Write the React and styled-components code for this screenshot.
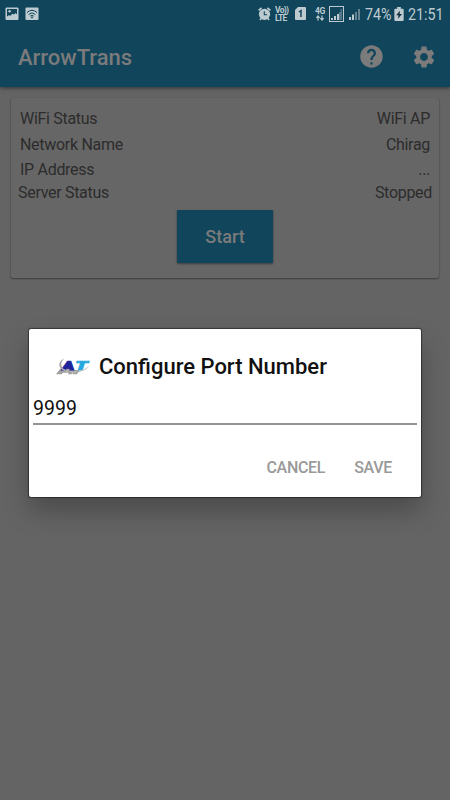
import React from 'react'
import styled, { createGlobalStyle } from 'styled-components';
import { MdHelp, MdSettings } from 'react-icons/md';

const GlobalStyle=createGlobalStyle`
* {
  box-sizing: border-box;
}
body {
  margin: 0;
  background: #646464;
  font-family: Roboto, sans-serif;
}
`;

const Screen=styled.div`
position: relative;
display: flex;
flex-direction: column;
width: 450px;
height: 800px;
overflow: hidden;
background: #646464;
`;

const Header=styled.header`
height: 87px;
background: #11455b;
box-shadow: 0 1px 4px rgba(0, 0, 0, 0.5);
`;

const StatusBar=styled.div`
display: flex;
align-items: center;
justify-content: space-between;
height: 27px;
padding: 0 7px 0 5px;
color: #bdcbd1;
`;

const StatusGroup=styled.div`
display: flex;
align-items: center;
height: 27px;
gap: ${({ $gap }) => $gap || 0}px;
`;

const Glyph=styled.svg`
display: block;
flex: none;
margin-right: ${({ $space }) => $space || 0}px;
`;

const Small=styled.div`
display: flex;
flex-direction: column;
width: ${({ $width }) => $width}px;
margin-right: ${({ $space }) => $space}px;
font-size: 8.5px;
font-weight: 700;
letter-spacing: ${({ $tracking }) => $tracking || 0}px;
line-height: 8px;
white-space: nowrap;
`;

const StatusText=styled.span`
width: ${({ $width }) => $width}px;
margin-right: ${({ $space }) => $space || 0}px;
font-size: 17px;
line-height: 28px;
white-space: nowrap;
transform: scaleX(0.84);
transform-origin: left center;
`;

const Toolbar=styled.div`
display: flex;
align-items: center;
height: 60px;
padding: 0 13px 0 18px;
color: #7b7b7b;
`;

const AppName=styled.h1`
flex: 1;
margin: 2px 0 0;
font-size: 22px;
font-weight: 500;
line-height: 26px;
`;

const IconButton=styled.button`
display: flex;
margin: 0 0 1px;
margin-left: ${({ $left }) => $left || 0}px;
padding: 0;
border: 0;
background: none;
color: inherit;
`;

const Card=styled.section`
display: flex;
flex-direction: column;
align-items: center;
width: 428px;
height: 180px;
margin: 11px 0 0 11px;
padding-top: 8px;
border-radius: 2px;
background: #666666;
box-shadow: 0 1px 2px rgba(0, 0, 0, 0.4), 0 0 1px rgba(0, 0, 0, 0.2);
`;

const Row=styled.div`
display: flex;
justify-content: space-between;
width: 100%;
height: ${({ $height }) => $height}px;
padding: ${({ $wide }) => ($wide ? '0 7px 0 7px' : '0 9px 0 9px')};
color: #2c2c2c;
font-size: 16px;
letter-spacing: -0.3px;
line-height: 25px;
`;

const StartButton=styled.button`
width: 96px;
height: 53px;
margin-top: 5px;
padding: 0;
border: 0;
background: #11455b;
box-shadow: 0 1px 2px rgba(0, 0, 0, 0.4);
color: #7b7b7b;
font-family: inherit;
font-size: 18px;
font-weight: 500;
`;

const Dialog=styled.div`
position: absolute;
top: 329px;
left: 29px;
display: flex;
flex-direction: column;
width: 392px;
height: 168px;
padding: 0 4px;
border-radius: 2px;
background: #fff;
box-shadow: 0 0 1px 1px rgba(0, 0, 0, 0.45), 0 14px 26px rgba(0, 0, 0, 0.26);
`;

const DialogHeader=styled.div`
display: flex;
align-items: center;
height: 60px;
padding: 15px 0 0 22px;
`;

const DialogTitle=styled.h2`
margin: 0 0 0 8px;
color: #111;
font-size: 22px;
font-weight: 500;
line-height: 28px;
white-space: nowrap;
`;

const PortInput=styled.input`
width: 384px;
height: 36px;
padding: 4px 0 0;
border: 0;
border-bottom: 2px solid #949494;
outline: 0;
background: none;
color: #111;
font-family: inherit;
font-size: 19.5px;
`;

const Actions=styled.div`
display: flex;
justify-content: flex-end;
gap: 29px;
padding: 33px 25px 0 0;
`;

const Action=styled.button`
padding: 0;
border: 0;
background: none;
color: #999;
font-family: inherit;
font-size: 16px;
font-weight: 500;
letter-spacing: -0.3px;
line-height: 20px;
`;

const LogoText=styled.text`
font-family: Roboto, sans-serif;
font-size: 13px;
font-weight: 900;
stroke: currentColor;
stroke-width: 1px;
fill: currentColor;
color: ${({ $color }) => $color};
`;

const PictureIcon = () => (
  <Glyph width="14" height="14" viewBox="0 0 14 14">
    <rect x="0.5" y="0.5" width="13" height="12.5" rx="1" fill="#bdcbd1" />
    <path d="M2 2h10v5.4L10.5 6 9 7.5 7.5 6.7 5 9 4 8 2 9.5z" fill="#11455b" />
    <circle cx="4.6" cy="4.3" r="1.2" fill="#bdcbd1" />
  </Glyph>
)

const WifiIcon = () => (
  <Glyph width="14" height="14" viewBox="0 0 14 14">
    <rect x="0.5" y="0.5" width="13" height="12.5" rx="1" fill="#bdcbd1" />
    <path d="M2 5.5Q7 1 12 5.5M3.7 7.4Q7 4.4 10.3 7.4M5.3 9.1Q7 7.7 8.7 9.1" fill="none" stroke="#11455b" />
    <circle cx="7" cy="10.4" r="0.9" fill="#11455b" />
  </Glyph>
)

const AlarmIcon = () => (
  <Glyph width="13" height="14" viewBox="0 0 13 14" $space={4}>
    <circle cx="6.5" cy="7.3" r="5.6" fill="currentColor" />
    <path d="M.6 3.4L3.6 .8M12.4 3.4L9.4 .8M3 11.5l-1 1.5M10 11.5l1 1.5" stroke="currentColor" strokeWidth="1.6" />
    <path d="M6.3 4.2v3.5h2.8" fill="none" stroke="#11455b" strokeWidth="1.1" />
  </Glyph>
)

const SimIcon = () => (
  <Glyph width="11" height="13" viewBox="0 0 11 13" $space={9}>
    <path d="M3 0h7q1 0 1 1v11q0 1-1 1H1q-1 0-1-1V3z" fill="currentColor" />
    <path d="M4 5l2-1.4V10" fill="none" stroke="#11455b" strokeWidth="1.5" />
  </Glyph>
)

const DataIcon = () => (
  <Glyph width="10" height="6" viewBox="0 0 10 6">
    <path d="M3 5.5V1.5M1.4 2.8L3 1l1.6 1.8M7 .5v4M5.4 3.2L7 5l1.6-1.8" fill="none" stroke="currentColor" strokeWidth="1.2" />
  </Glyph>
)

const SignalIcon = () => (
  <Glyph width="16" height="16" viewBox="0 0 16 16" $space={4}>
    <rect x="0.5" y="0.5" width="14" height="15" fill="none" stroke="currentColor" />
    <path d="M2 12h2v2H2zM5 10h2v4H5zM8 8h2v6H8z" fill="currentColor" />
    <path d="M10 6h1.5v8H10zM11.5 3H13v11h-1.5z" fill="#55798a" />
  </Glyph>
)

const SecondSignalIcon = () => (
  <Glyph width="12" height="16" viewBox="0 0 12 16" $space={4}>
    <path d="M0 11h2v3H0zM3 8.5h2V14H3z" fill="currentColor" />
    <path d="M6 6h2v8H6zM9 3h2v11H9z" fill="#64848f" />
  </Glyph>
)

const BatteryIcon = () => (
  <Glyph width="10" height="14" viewBox="0 0 10 15" $space={4}>
    <path d="M3 0h4v2h2q1 0 1 1v11q0 1-1 1H1q-1 0-1-1V3q0-1 1-1h2z" fill="currentColor" />
    <path d="M6 4L2 8.8h2.4L4 12.5 8.2 7.6H5.7z" fill="#11303f" />
  </Glyph>
)

const Logo = () => (
  <Glyph width="36" height="18" viewBox="0 0 36 18">
    <path d="M1 16.3l5.5-7h9l3 3.7-2 3.3h-3.5l.8-1.6H8L6.5 16.3zM18 12h7l-3 4.3h-4.5z" fill="#a0a0a0" />
    <LogoText transform="translate(6.5 12.3) skewX(-10) scale(1.36 .96)" $color="#20249a">A</LogoText>
    <LogoText transform="translate(19 12.3) skewX(-18) scale(1.5 .96)" $color="#27a9df">T</LogoText>
    <path d="M8 1C1 6 5 13 16 13.7C25 14.3 31 12 34.5 7" fill="none" stroke="#fff" strokeWidth="1" />
    <path d="M9 .5C0 6 5 13 16 14.2C25 15 32 12 34.5 7C31 11.5 25 14 16 13.2C7 12.4 3 7 9 .5" fill="#a0a0a0" />
  </Glyph>
)

const App = () => {
  return (
    <Screen>
      <GlobalStyle />
      <Header>
        <StatusBar>
          <StatusGroup $gap={6}>
            <PictureIcon />
            <WifiIcon />
          </StatusGroup>
          <StatusGroup>
            <AlarmIcon />
            <Small $width={15} $space={5} $tracking={-0.7}><span>Vo))</span><span>LTE</span></Small>
            <SimIcon />
            <Small $width={11} $space={3} $tracking={-0.3}><span>4G</span><DataIcon /></Small>
            <SignalIcon />
            <SecondSignalIcon />
            <StatusText $width={26} $space={3}>74%</StatusText>
            <BatteryIcon />
            <StatusText $width={35}>21:51</StatusText>
          </StatusGroup>
        </StatusBar>
        <Toolbar>
          <AppName>ArrowTrans</AppName>
          <IconButton aria-label="Help"><MdHelp size={27} /></IconButton>
          <IconButton aria-label="Settings" $left={26}><MdSettings size={26} /></IconButton>
        </Toolbar>
      </Header>
      <Card>
        <Row $height={26}><span>WiFi Status</span><span>WiFi AP</span></Row>
        <Row $height={25}><span>Network Name</span><span>Chirag</span></Row>
        <Row $height={23}><span>IP Address</span><span>...</span></Row>
        <Row $height={25} $wide><span>Server Status</span><span>Stopped</span></Row>
        <StartButton>Start</StartButton>
      </Card>
      <Dialog role="dialog">
        <DialogHeader>
          <Logo />
          <DialogTitle>Configure Port Number</DialogTitle>
        </DialogHeader>
        <PortInput defaultValue="9999" />
        <Actions>
          <Action>CANCEL</Action>
          <Action>SAVE</Action>
        </Actions>
      </Dialog>
    </Screen>
  )
}

export default App
